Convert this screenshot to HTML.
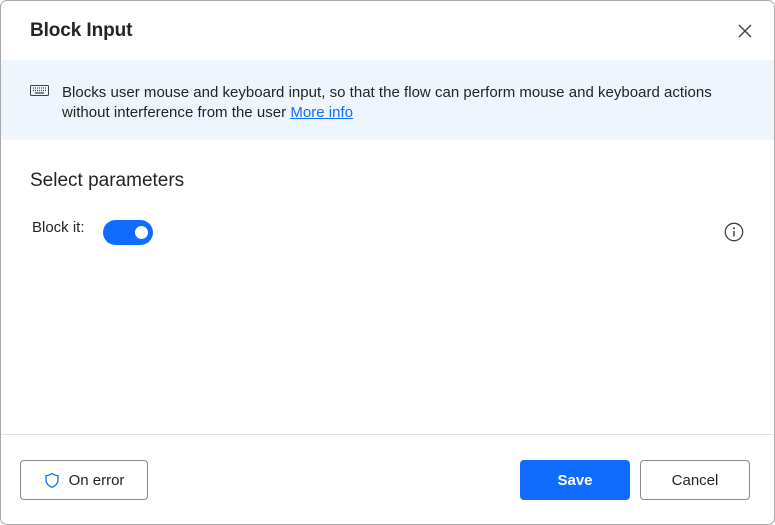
<!DOCTYPE html>
<html><head><style>
*{box-sizing:border-box;margin:0;padding:0}
body{width:775px;height:525px;background:#fff;font-family:"Liberation Sans",sans-serif;color:#242424;position:relative;overflow:hidden}
.frame{position:absolute;left:0;top:0;width:775px;height:525px;border:1px solid #a8a8a8;border-radius:7px;background:#fff}
.title{position:absolute;left:30px;top:20px;font-size:19px;font-weight:bold;color:#242424;letter-spacing:-0.1px}
.close{position:absolute;left:738px;top:24px}
.banner{position:absolute;left:1px;top:60px;width:773px;height:80px;background:#eff5fd}
.btext{position:absolute;left:62px;top:83px;font-size:15px;line-height:20px;color:#242424;letter-spacing:0.02px}
.btext a{color:#0f6cff;text-decoration:underline}
.kb{position:absolute;left:30px;top:85px}
.sp{position:absolute;left:30px;top:170px;font-size:19px;color:#242424}
.lbl{position:absolute;left:32px;top:219px;font-size:15px}
.tog{position:absolute;left:103px;top:220px;width:50px;height:25px;border-radius:13px;background:#0f6cff}
.tog:after{content:"";position:absolute;right:5px;top:6px;width:13px;height:13px;border-radius:50%;background:#fff}
.info{position:absolute;left:724px;top:222px}
.sep{position:absolute;left:1px;top:434px;width:773px;height:1px;background:#e0e0e0}
.btn{position:absolute;top:460px;height:40px;border:1px solid #8a8a8a;border-radius:4px;background:#fff;font-size:15px;display:flex;align-items:center;justify-content:center}
.save{background:#0f6cff;border-color:#0f6cff;color:#fff;font-weight:bold}
</style></head><body>
<div class="frame"></div>
<div class="title">Block Input</div>
<svg class="close" width="14" height="14" viewBox="0 0 14 14"><path d="M1 1L13 13M13 1L1 13" stroke="#424242" stroke-width="1.4"/></svg>
<div class="banner"></div>
<svg class="kb" width="19" height="11" viewBox="0 0 19 11"><rect x="0.5" y="0.5" width="18" height="10" rx="1" fill="none" stroke="#424242"/><path d="M3 3h1M5 3h1M7 3h1M9 3h1M11 3h1M13 3h1M15 3h1M3 5.5h1M5 5.5h1M7 5.5h1M9 5.5h1M11 5.5h1M13 5.5h1M15 5.5h1M5 8h9" stroke="#424242" stroke-width="1.2"/></svg>
<div class="btext">Blocks user mouse and keyboard input, so that the flow can perform mouse and keyboard actions<br>without interference from the user <a>More info</a></div>
<div class="sp">Select parameters</div>
<div class="lbl">Block it:</div>
<div class="tog"></div>
<svg class="info" width="20" height="20" viewBox="0 0 20 20"><circle cx="10" cy="10" r="8.7" fill="none" stroke="#424242" stroke-width="1.3"/><path d="M10 9v5.5" stroke="#424242" stroke-width="1.5"/><circle cx="10" cy="6.3" r="1" fill="#424242"/></svg>
<div class="sep"></div>
<div class="btn" style="left:20px;width:128px"><svg width="16" height="17" viewBox="0 0 16 17" style="margin-right:9px"><path d="M8 1.5C5.8 3 3.8 3.6 2 3.6V8c0 3.5 2.5 5.8 6 7.3 3.5-1.5 6-3.8 6-7.3V3.6C12.2 3.6 10.2 3 8 1.5z" fill="none" stroke="#0f6cff" stroke-width="1.3"/></svg>On error</div>
<div class="btn save" style="left:520px;width:110px">Save</div>
<div class="btn" style="left:640px;width:110px">Cancel</div>
</body></html>
